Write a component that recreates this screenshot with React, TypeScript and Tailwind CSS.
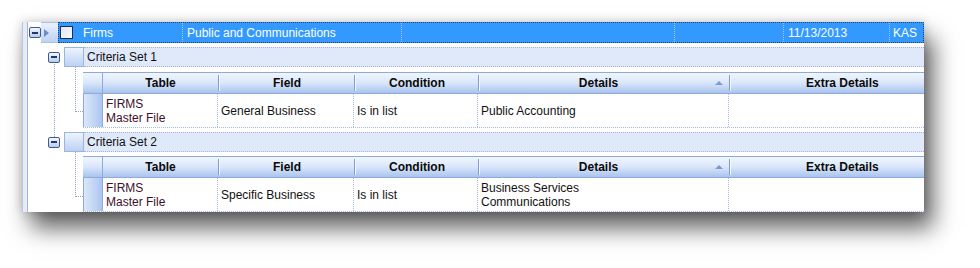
import React from "react";

const Expander = () => (
  <div className="w-[12px] h-[11px] rounded-[2px] border border-[#3d5c8e] bg-gradient-to-b from-[#f4f7fc] to-[#b9cbea] flex items-center justify-center">
    <div className="w-[6px] h-[2px] bg-[#1e3a6a]" />
  </div>
);

const HeaderDivider = () => (
  <div className="w-[2px] h-[16px] flex shrink-0">
    <div className="w-[1px] h-full bg-[#7f9dd1]" />
    <div className="w-[1px] h-full bg-[#f4f8fe]" />
  </div>
);

function GroupRow({ label }: { label: string }) {
  return (
    <div className="h-[20px] flex items-stretch">
      <div className="w-[20px]" />
      <div className="flex items-center">
        <Expander />
      </div>
      <div className="w-[4px]" />
      <div className="w-[20px] border border-[#9bb5e0] bg-gradient-to-b from-[#eef4fd] to-[#bcd1f3]" />
      <div className="flex-1 flex items-center pl-[3px] bg-[#dfe9f9] border-y border-dotted border-[#9fb5dc] text-[#111]">
        {label}
      </div>
    </div>
  );
}

function CriteriaTable({ gap, table, field, details }: { gap: string; table: string[]; field: string; details: string[] }) {
  return (
    <div className="flex">
      {/* tree connector */}
      <div className="w-[55px] relative">
        <div className="absolute left-[47px] top-0 w-[8px] h-[45px] border-l border-b border-dotted border-[#8ea3c6]" />
      </div>
      <div className="flex-1 flex flex-col">
        <div className={gap} />
        {/* header */}
        <div className="h-[22px] flex items-center border-y border-[#8fabdc] bg-gradient-to-b from-[#f1f6fd] via-[#d9e6fa] to-[#a9c4ef] font-bold text-[#0a0a0a]">
          <div className="w-[20px] h-full border-r border-[#8fabdc]" />
          <div className="w-[115px] text-center">Table</div>
          <HeaderDivider />
          <div className="w-[134px] text-center">Field</div>
          <HeaderDivider />
          <div className="w-[122px] text-center">Condition</div>
          <HeaderDivider />
          <div className="w-[249px] flex items-center">
            <div className="flex-1 text-center pl-[2px]">Details</div>
            <svg width="8" height="5" viewBox="0 0 8 5" className="mr-[6px] mb-[2px]">
              <path d="M0 5 L4 1 L8 5 Z" fill="#7f9bcb" />
            </svg>
          </div>
          <HeaderDivider />
          <div className="flex-1 pl-[75px]">Extra Details</div>
        </div>
        {/* data row */}
        <div className="h-[34px] flex border-b border-dotted border-[#a7bbe0] text-[#111] leading-[14px]">
          <div className="w-[20px] border-x border-[#8fabdc] bg-gradient-to-r from-[#dce8fa] to-[#acc5f0]" />
          <div className="w-[115px] pl-[3px] flex flex-col justify-center text-[#3d0f2a] border-r border-dotted border-[#a7bbe0]">
            {table.map((t) => (
              <span key={t}>{t}</span>
            ))}
          </div>
          <div className="w-[136px] pl-[3px] flex items-center border-r border-dotted border-[#a7bbe0]">{field}</div>
          <div className="w-[124px] pl-[3px] flex items-center border-r border-dotted border-[#a7bbe0]">Is in list</div>
          <div className="w-[251px] pl-[3px] flex flex-col justify-center border-r border-dotted border-[#a7bbe0]">
            {details.map((d) => (
              <span key={d}>{d}</span>
            ))}
          </div>
          <div className="flex-1" />
        </div>
      </div>
    </div>
  );
}

export default function App() {
  return (
    <div className="w-[980px] h-[268px] bg-white overflow-hidden pt-[22px] pl-[22px] font-['Liberation_Sans',Arial,sans-serif] text-[12px]">
      <div className="w-[902px] h-[190px] flex bg-white overflow-hidden shadow-[0_0_10px_rgba(0,0,0,0.2),9px_16px_22px_rgba(0,0,0,0.62)]">
        {/* left stripe */}
        <div className="w-[6px] bg-[#e6ebf4] border-l border-[#b8c7e0] border-r border-r-[#a3b6d8]" />
        <div className="flex-1 flex flex-col relative">
          {/* tree line between criteria sets */}
          <div className="absolute left-[26px] top-[42px] h-[73px] border-l border-dotted border-[#8ea3c6]" />

          {/* selected top row */}
          <div className="h-[21px] flex items-stretch">
            <div className="w-[13px] flex items-center pl-[1px]">
              <Expander />
            </div>
            <div className="w-[17px] flex items-center pl-[3px] bg-gradient-to-b from-[#eaf1fc] to-[#bed2f3] border-y border-[#a9bfe5]">
              <svg width="5" height="8" viewBox="0 0 5 8">
                <path d="M0 0 L5 4 L0 8 Z" fill="#6f8fc4" />
              </svg>
            </div>
            <div className="flex-1 flex items-stretch bg-[#3399ff] border border-dotted border-[#22416b] text-white">
              <div className="w-[17px] flex items-center pl-[1px]">
                <div className="w-[13px] h-[13px] border border-[#1d2f4e] bg-gradient-to-br from-[#dfe7f3] to-[#f8fbff]" />
              </div>
              <div className="w-[107px] pl-[7px] flex items-center border-r border-dotted border-[#a3cdf7]">Firms</div>
              <div className="w-[219px] pl-[4px] flex items-center border-r border-dotted border-[#a3cdf7]">Public and Communications</div>
              <div className="w-[273px] border-r border-dotted border-[#a3cdf7]" />
              <div className="w-[109px] border-r border-dotted border-[#a3cdf7]" />
              <div className="w-[106px] pl-[4px] flex items-center border-r border-dotted border-[#a3cdf7]">11/13/2013</div>
              <div className="flex-1 pl-[3px] flex items-center">KAS</div>
            </div>
          </div>

          <div className="h-[4px]" />
          <GroupRow label="Criteria Set 1" />
          <CriteriaTable gap="h-[5px]" table={["FIRMS", "Master File"]} field="General Business" details={["Public Accounting"]} />
          <div className="h-[4px]" />
          <GroupRow label="Criteria Set 2" />
          <CriteriaTable
            gap="h-[4px]"
            table={["FIRMS", "Master File"]}
            field="Specific Business"
            details={["Business Services", "Communications"]}
          />
        </div>
      </div>
    </div>
  );
}
